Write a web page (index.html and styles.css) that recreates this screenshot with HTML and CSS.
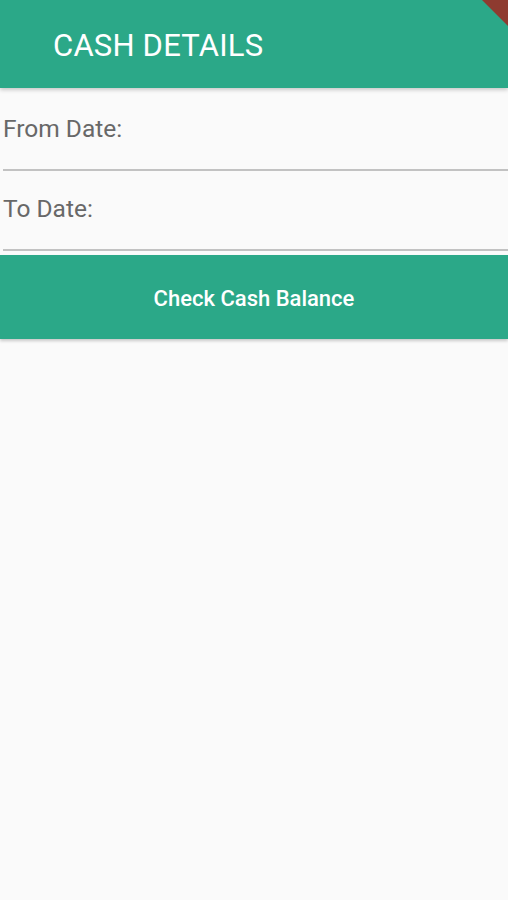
FILE: index.html
```html
<!DOCTYPE html>
<html>
<head>
<meta charset="utf-8">
<link rel="stylesheet" href="styles.css">
</head>
<body>
<div class="app">
  <header class="appbar">
    <h1 class="title">CASH DETAILS</h1>
    <div class="banner"></div>
  </header>
  <main class="form">
    <div class="field"><span class="label">From Date:</span></div>
    <div class="field"><span class="label">To Date:</span></div>
  </main>
  <button class="action">Check Cash Balance</button>
</div>
</body>
</html>
```

FILE: styles.css
```css
* { box-sizing: border-box; }
html, body { margin: 0; padding: 0; }
body {
  background: #fafafa;
  font-family: Roboto, "Noto Sans", sans-serif;
  width: 508px;
  height: 900px;
  overflow: hidden;
}
.app { display: flex; flex-direction: column; }
.appbar {
  position: relative;
  height: 88px;
  background: #2ba888;
  display: flex;
  align-items: center;
  padding-left: 53px;
  box-shadow: 0 2px 4px rgba(0,0,0,0.2);
  z-index: 2;
}
.title {
  margin: 0;
  color: #ffffff;
  font-size: 31px;
  font-weight: 400;
  letter-spacing: 0.2px;
  padding-top: 2px;
}
.banner {
  position: absolute;
  top: 0;
  right: 0;
  width: 26px;
  height: 26px;
  background: #8e3b30;
  clip-path: polygon(0 0, 100% 0, 100% 100%);
}
.form {
  padding: 3px 0 0 3px;
  display: flex;
  flex-direction: column;
}
.field {
  height: 80px;
  border-bottom: 2px solid #c2c2c2;
  display: flex;
  align-items: flex-start;
  padding-top: 23px;
}
.label {
  font-size: 24.5px;
  line-height: 29px;
  color: #686868;
}
.action {
  margin-top: 4px;
  height: 84px;
  border: none;
  background: #2ba888;
  color: #ffffff;
  font-family: Roboto, "Noto Sans", sans-serif;
  font-size: 22px;
  font-weight: 500;
  box-shadow: 0 2px 3px rgba(0,0,0,0.2);
  padding: 2px 0 0 0;
}
```
